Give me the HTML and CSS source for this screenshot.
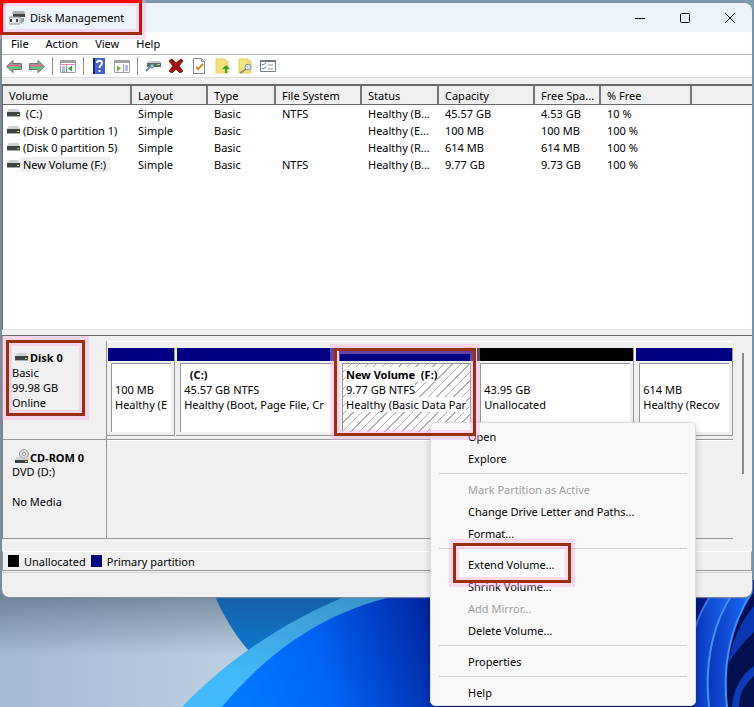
FILE: index.html
```
<!DOCTYPE html>
<html lang="en">
<head>
    <meta charset="UTF-8">
    <title>Disk Management</title>
    <link rel="stylesheet" href="styles.css">
</head>
<body>
<svg width="0" height="0" class="defs">
    <symbol id="drive" viewBox="0 0 13 8">
        <path d="M2 0h9l2 3H0z" fill="#cdd3d3"/>
        <path d="M0 3h13v4H0z" fill="#3f4544"/>
        <path d="M0 7h13v1H0z" fill="#a5abab"/>
        <path d="M10 5h2v1h-2z" fill="#b9e04a"/>
    </symbol>
</svg>
<div class="desktop">
    <svg class="wallpaper" viewBox="0 580 754 127" preserveAspectRatio="none">
        <defs>
            <linearGradient id="sky" x1="0" y1="0" x2="1" y2="0">
                <stop offset="0" stop-color="#a3bad4"/>
                <stop offset=".3" stop-color="#bccfe0"/>
            </linearGradient>
            <linearGradient id="shade" x1="0" y1="0" x2="0" y2="1">
                <stop offset="0" stop-color="#33475c" stop-opacity=".6"/>
                <stop offset=".6" stop-color="#33475c" stop-opacity="0"/>
            </linearGradient>
            <linearGradient id="petal" x1="0" y1="0" x2="0" y2="1">
                <stop offset="0" stop-color="#1a579e"/>
                <stop offset="1" stop-color="#0b78cc"/>
            </linearGradient>
            <linearGradient id="rim" x1="0" y1="1" x2="1" y2="0">
                <stop offset=".2" stop-color="#43b9fb"/>
                <stop offset="1" stop-color="#3685b4"/>
            </linearGradient>
            <linearGradient id="bloom" gradientUnits="userSpaceOnUse" x1="250" y1="707" x2="450" y2="640">
                <stop offset="0" stop-color="#0078ff"/>
                <stop offset=".4" stop-color="#0062f4"/>
                <stop offset="1" stop-color="#001f97"/>
            </linearGradient>
            <linearGradient id="ray" x1="0" y1="0" x2="1" y2="0">
                <stop offset="0" stop-color="#0a35b8"/>
                <stop offset=".8" stop-color="#1763ec"/>
                <stop offset="1" stop-color="#4597f8"/>
            </linearGradient>
        </defs>
        <path d="M0 580h754v127H0z" fill="url(#sky)"/>
        <path d="M0 580h440v127H0z" fill="url(#shade)"/>
        <path d="M208 580C222 615 236 637 250 652L380 580z" fill="url(#petal)"/>
        <path d="M182 707C230 657 290 618 352 594L470 580V707z" fill="url(#rim)"/>
        <path d="M222 707C260 661 315 614 395 596L470 580V707z" fill="url(#bloom)"/>
        <path d="M440 580h314v127H440z" fill="#031c86"/>
        <path d="M694 640C697 618 704 604 713 592L734 592C714 620 704 660 709 707H694z" fill="url(#ray)"/>
        <path d="M708 707C704 660 714 620 734 592H752C731 623 722 660 727 707z" fill="url(#ray)"/>
        <path d="M754 592C731 630 722 665 728 707H754z" fill="#03104f"/>
        <path d="M728 664C732 640 742 620 754 606V632C744 642 735 652 728 664z" fill="#0a36b4"/>
        <path d="M732 707C733 690 741 675 754 666V676C744 684 739 695 739 707z" fill="#0d3cba"/>
        <path d="M694 632C698 616 704 605 713 592" fill="none" stroke="#3c79dc" stroke-width="2"/>
        <path d="M709 707C704 660 714 620 734 592M727 707C722 665 731 624 752 592" fill="none" stroke="#4292f4" stroke-width="2"/>
    </svg>

    <div class="window">
        <div class="titlebar">
            <svg class="app-icon" width="16" height="15" viewBox="0 0 16 15">
                <path d="M4 1h11l1 3H3z" fill="#a9adad"/>
                <path d="M4 4h12v3H4z" fill="#444"/>
                <path d="M0 7h11v7H0z" fill="#e4e4e4" stroke="#999"/>
                <path d="M2 9v3M8 9v3" stroke="#444" stroke-width="2"/>
                <path d="M4 11h3" stroke="#fff" stroke-width="2"/>
                <path d="M12 8h3v3l-3 3z" fill="#9a9e9e"/>
            </svg>
            <h1 class="title">Disk Management</h1>
            <div class="window-buttons">
                <button type="button" aria-label="Minimize"><svg width="12" height="12" viewBox="0 0 12 12"><path d="M1 6.500h10"/></svg></button>
                <button type="button" aria-label="Maximize"><svg width="12" height="12" viewBox="0 0 12 12"><rect x="1.500" y="1.500" width="9" height="9" rx="1"/></svg></button>
                <button type="button" aria-label="Close"><svg width="12" height="12" viewBox="0 0 12 12"><path d="M1 1l10 10M11 1L1 11"/></svg></button>
            </div>
            <div class="mark mark-title"></div>
        </div>

        <div class="menubar">
            <button type="button">File</button>
            <button type="button">Action</button>
            <button type="button">View</button>
            <button type="button">Help</button>
        </div>

        <div class="toolbar">
            <button type="button" aria-label="Back"><svg width="16" height="16" viewBox="0 0 16 16"><path d="M.5 8.500L7 2.500v3h8.500v6H7v3z" fill="#5cc87c" stroke="#7d6d74"/><path d="M2 7.500h13" stroke="#f0609c" stroke-width="2"/></svg></button>
            <button type="button" aria-label="Forward"><svg width="16" height="16" viewBox="0 0 16 16"><path d="M15.500 8.500L9 2.500v3H.5v6H9v3z" fill="#5cc87c" stroke="#7d6d74"/><path d="M1 7.500h13" stroke="#f0609c" stroke-width="2"/></svg></button>
            <span class="divider"></span>
            <button type="button" aria-label="Show console tree"><svg width="16" height="16" viewBox="0 0 16 16"><path d="M.5 2.500h15v12H.5z" fill="#fff" stroke="#9c9fa7"/><path d="M1 4h14" stroke="#9c9fa7" stroke-width="2"/><path d="M1 6.500h14" stroke="#ee7fae"/><path d="M6.500 7v7" stroke="#9c9fa7"/><path d="M2 9h3M2 11h3M2 13h3" stroke="#5e81b5"/><path d="M8 10.500l4-3v6z" fill="#23ad3c"/></svg></button>
            <span class="divider"></span>
            <button type="button" aria-label="Help topics"><svg width="16" height="16" viewBox="0 0 16 16"><path d="M2 0h12v16H2z" fill="#4263d0"/><path d="M2 0h2v16H2z" fill="#162c7b"/><path d="M6 5c0-3 5-3 5 0 0 2-2.500 2-2.500 5M8.500 12v2" fill="none" stroke="#fff" stroke-width="2"/></svg></button>
            <button type="button" aria-label="Show action pane"><svg width="16" height="16" viewBox="0 0 16 16"><path d="M.5 2.500h15v12H.5z" fill="#fff" stroke="#9c9fa7"/><path d="M1 4h14" stroke="#9c9fa7" stroke-width="2"/><path d="M9.500 6v8" stroke="#9c9fa7"/><path d="M11 8h3M11 10h3M11 12h3" stroke="#5e81b5"/><path d="M3 7.500l4 3-4 3z" fill="#78a92f"/></svg></button>
            <span class="divider"></span>
            <button type="button" aria-label="Refresh disks"><svg width="16" height="16" viewBox="0 0 16 16"><path d="M2 5l2-2h11l1 2z" fill="#c3c9cc"/><path d="M2 5h14v4H2z" fill="#59676e"/><path d="M12 6h3v1h-3z" fill="#9ee04a"/><path d="M5 9l-4 4" stroke="#7997a7" stroke-width="2"/><circle cx="7" cy="8" r="2" fill="#a9cddd" stroke="#5b7a8b"/></svg></button>
            <button type="button" aria-label="Delete"><svg width="16" height="16" viewBox="0 0 16 16"><path d="M1 3l3-2 4 4 5-4 2 2-4 5 4 5-3 2-4-4-4 4-3-2 4-5z" fill="#a3130d" stroke="#7e1d19"/></svg></button>
            <button type="button" aria-label="Check"><svg width="16" height="16" viewBox="0 0 16 16"><path d="M2.500.5h8l3 3v12h-11z" fill="#fff" stroke="#888"/><path d="M10.500.5v3h3" fill="none" stroke="#888"/><path d="M5 9l2 2 5-5" fill="none" stroke="#c98923" stroke-width="2"/></svg></button>
            <button type="button" aria-label="Open folder"><svg width="16" height="16" viewBox="0 0 16 16"><path d="M2 1h9v2h3v12H2z" fill="#f6e27a" stroke="#e4ce65"/><path d="M11 15V11H8l4-4 4 4h-3v4z" fill="#439a2b"/></svg></button>
            <button type="button" aria-label="Find"><svg width="16" height="16" viewBox="0 0 16 16"><path d="M2 1h9v2h3v12H2z" fill="#f6e27a" stroke="#e4ce65"/><circle cx="11" cy="9" r="3" fill="#d2e8f4" stroke="#7e9aa5"/><path d="M9 11l-6 4" stroke="#9a8d74" stroke-width="2"/></svg></button>
            <button type="button" aria-label="Options"><svg width="16" height="16" viewBox="0 0 16 16"><path d="M.5 2.500h15v11H.5z" fill="#fff" stroke="#6e7887"/><path d="M0 3h16" stroke="#6e7887" stroke-width="2"/><path d="M2 6l1 1 3-2M2 10l1 1 3-2" fill="none" stroke="#507dc5"/><path d="M8 7h5M8 11h5" stroke="#8b96a6"/></svg></button>
        </div>

        <div class="volumes">
            <table>
                <colgroup>
                    <col class="c-volume"><col class="c-layout"><col class="c-type"><col class="c-fs"><col class="c-status"><col class="c-capacity"><col class="c-free"><col class="c-percent"><col>
                </colgroup>
                <thead>
                <tr><th>Volume</th><th>Layout</th><th>Type</th><th>File System</th><th>Status</th><th>Capacity</th><th>Free Spa...</th><th>% Free</th><th></th></tr>
                </thead>
                <tbody>
                <tr><td><svg class="drive"><use href="#drive"/></svg><span>&nbsp;(C:)</span></td><td>Simple</td><td>Basic</td><td>NTFS</td><td>Healthy (B...</td><td>45.57 GB</td><td>4.53 GB</td><td>10 %</td><td></td></tr>
                <tr><td><svg class="drive"><use href="#drive"/></svg><span>(Disk 0 partition 1)</span></td><td>Simple</td><td>Basic</td><td></td><td>Healthy (E...</td><td>100 MB</td><td>100 MB</td><td>100 %</td><td></td></tr>
                <tr><td><svg class="drive"><use href="#drive"/></svg><span>(Disk 0 partition 5)</span></td><td>Simple</td><td>Basic</td><td></td><td>Healthy (R...</td><td>614 MB</td><td>614 MB</td><td>100 %</td><td></td></tr>
                <tr><td><svg class="drive"><use href="#drive"/></svg><span class="selected">New Volume (F:)</span></td><td>Simple</td><td>Basic</td><td>NTFS</td><td>Healthy (B...</td><td>9.77 GB</td><td>9.73 GB</td><td>100 %</td><td></td></tr>
                </tbody>
            </table>
        </div>

        <div class="disks">
            <div class="disk-list">
                <div class="disk">
                    <div class="disk-info">
                        <h2><svg class="drive"><use href="#drive"/></svg>Disk 0</h2>
                        <p>Basic</p>
                        <p>99.98 GB</p>
                        <p>Online</p>
                        <div class="mark mark-disk"></div>
                    </div>
                    <div class="partitions">
                        <div class="partition p-efi">
                            <div class="bar"></div>
                            <div class="body"><p>&nbsp;</p><p>100 MB</p><p>Healthy (E</p></div>
                        </div>
                        <div class="partition p-c">
                            <div class="bar"></div>
                            <div class="body"><h3>&nbsp; (C:)</h3><p>45.57 GB NTFS</p><p>Healthy (Boot, Page File, Cr</p></div>
                        </div>
                        <div class="partition p-f active">
                            <div class="bar"></div>
                            <div class="body"><h3><span>New Volume &nbsp;(F:)</span></h3><p><span>9.77 GB NTFS</span></p><p><span>Healthy (Basic Data Par</span></p></div>
                            <div class="mark mark-partition"></div>
                        </div>
                        <div class="partition p-free">
                            <div class="bar unallocated"></div>
                            <div class="body"><p>&nbsp;</p><p>43.95 GB</p><p>Unallocated</p></div>
                        </div>
                        <div class="partition p-rec">
                            <div class="bar"></div>
                            <div class="body"><p>&nbsp;</p><p>614 MB</p><p>Healthy (Recov</p></div>
                        </div>
                    </div>
                </div>
                <div class="disk">
                    <div class="disk-info">
                        <h2><svg class="cdrom" width="15" height="15" viewBox="0 0 15 15"><circle cx="9" cy="5" r="4.500" fill="#dcdcdc" stroke="#999"/><circle cx="9" cy="5" r="1.500" fill="#fff" stroke="#999"/><path d="M2 8h10l2 3H0z" fill="#c5caca" opacity=".8"/><path d="M0 11h13v3H0z" fill="#3f4544"/><path d="M10 12h2v1h-2z" fill="#e0d04a"/></svg>CD-ROM 0</h2>
                        <p>DVD (D:)</p>
                        <p>&nbsp;</p>
                        <p>No Media</p>
                    </div>
                    <div class="partitions"></div>
                </div>
            </div>
            <div class="scrollbar"><div class="thumb"></div></div>
        </div>

        <div class="legend">
            <span class="swatch unallocated"></span>Unallocated
            <span class="swatch"></span>Primary partition
        </div>
        <div class="statusbar"></div>
    </div>

    <div class="context-menu">
        <button type="button">Open</button>
        <button type="button">Explore</button>
        <hr>
        <button type="button" disabled>Mark Partition as Active</button>
        <button type="button">Change Drive Letter and Paths...</button>
        <button type="button">Format...</button>
        <hr>
        <button type="button" class="extend">Extend Volume...<span class="mark mark-extend"></span></button>
        <button type="button">Shrink Volume...</button>
        <button type="button" disabled>Add Mirror...</button>
        <button type="button">Delete Volume...</button>
        <hr>
        <button type="button">Properties</button>
        <hr>
        <button type="button">Help</button>
    </div>
</div>
</body>
</html>
```
FILE: styles.css
```
*{
    margin: 0;
    padding: 0;
    box-sizing: border-box;
}
body{
    font: 11px/15px "Segoe UI", "Noto Sans", "Open Sans", sans-serif;
    color: #000;
}
button{
    font: inherit;
    color: inherit;
    border: 0;
    background: none;
}
.defs{
    position: absolute;
}
.desktop{
    position: relative;
    min-height: 100vh;
    padding: 3px 2px 0 1px;
    background: #7c9db0;
    overflow: hidden;
}
.wallpaper{
    position: absolute;
    left: 0;
    bottom: 0;
    width: 100%;
    height: 127px;
}
.window{
    position: relative;
    border-left: 1px solid #85858f;
    border-radius: 8px;
    background: #f0f0f0;
    box-shadow: 0 0 1px 1px #7d8c9c;
}

/* title, menu and tools */
.titlebar{
    position: relative;
    display: flex;
    align-items: center;
    height: 29px;
    padding-left: 7px;
    background: #edf3fa;
    border-radius: 8px 8px 0 0;
}
.title{
    flex: 1;
    margin-left: 5px;
    font-size: 11px;
    font-weight: normal;
}
.window-buttons{
    display: flex;
}
.window-buttons button{
    width: 45px;
    height: 28px;
}
.window-buttons svg{
    display: block;
    margin: 0 auto;
    fill: none;
    stroke: #111;
}
.menubar{
    display: flex;
    gap: 17px;
    height: 23px;
    padding-left: 9px;
    background: #fff;
    border-bottom: 1px solid #b4b4b4;
}
.toolbar{
    display: flex;
    align-items: center;
    gap: 7px;
    height: 23px;
    padding-left: 4px;
    background: #fff;
    border-bottom: 1px solid #dcdcdc;
}
.toolbar button{
    height: 16px;
}
.toolbar svg{
    display: block;
}
.divider{
    width: 1px;
    height: 18px;
    background: #8a8a8a;
}

/* volume list */
.volumes{
    margin-top: 6px;
    height: 246px;
    background: #fff;
    border-top: 2px solid #696969;
    border-left: 1px solid #696969;
    border-bottom: 1px solid #e3e3e3;
}
.volumes table{
    width: 100%;
    table-layout: fixed;
    border-collapse: separate;
    border-spacing: 0;
}
.c-volume{ width: 129px; }
.c-layout{ width: 76px; }
.c-type{ width: 68px; }
.c-fs{ width: 86px; }
.c-status{ width: 77px; }
.c-capacity{ width: 96px; }
.c-free{ width: 66px; }
.c-percent{ width: 91px; }
.volumes th{
    height: 19px;
    padding-left: 6px;
    text-align: left;
    font-weight: normal;
    white-space: nowrap;
    background: #f0f0f0;
    border-right: 2px solid #777;
    border-bottom: 1px solid #696969;
}
.volumes th:last-child{
    border-right: 0;
}
.volumes td{
    height: 17px;
    padding-left: 6px;
    white-space: nowrap;
}
.volumes td:first-child{
    padding-left: 4px;
}
.volumes td span{
    padding: 0 3px;
}
.volumes .selected{
    padding-right: 5px;
    background: #f0f0f0;
}
.drive{
    width: 13px;
    height: 8px;
    vertical-align: 1px;
}

/* graphical view */
.disks{
    display: flex;
    margin-top: 5px;
    border-top: 1px solid #696969;
    border-left: 1px solid #808080;
}
.disk-list{
    flex: 1;
    min-width: 0;
    padding-top: 5px;
}
.disk{
    display: flex;
    height: 99px;
    border-bottom: 1px solid #969696;
}
.disk-info{
    position: relative;
    flex: none;
    width: 104px;
    padding: 9px 0 0 9px;
    border-right: 1px solid #969696;
}
.disk-info h2{
    height: 15px;
    padding-left: 3px;
    font-size: 11px;
    white-space: nowrap;
}
.disk-info .drive{
    margin-right: 2px;
}
.disk-info .cdrom{
    vertical-align: -2px;
}
.partitions{
    display: flex;
    flex: 1;
    min-width: 0;
    gap: 1px;
    padding-top: 6px;
    border-top: 1px solid #fff;
}
.partition{
    position: relative;
    display: flex;
    flex-direction: column;
    flex-basis: 0;
    min-width: 0;
    height: 88px;
    border-right: 1px solid #969696;
    border-bottom: 1px solid #969696;
    padding-left: 1px;
    background: #f0f0f0;
}
.p-efi{ flex-grow: 67; }
.p-c{ flex-grow: 161; }
.p-f{ flex-grow: 137; }
.p-free{ flex-grow: 158; }
.p-rec{ flex-grow: 97; }
.bar{
    height: 13px;
    background: #000080;
}
.unallocated{
    background: #000;
}
.body{
    flex: 1;
    margin: 2px 3px 3px;
    padding: 3px 0 3px 3px;
    background: #fff;
    border-top: 1px solid #969696;
    border-left: 1px solid #969696;
}
.body h3{
    font-size: 11px;
    white-space: nowrap;
}
.body p{
    white-space: nowrap;
}
.active .body{
    border-right: 1px solid #969696;
    background: repeating-linear-gradient(135deg, #fff 0, #fff 5px, #b0b0b0 5px, #b0b0b0 6px);
}
.active .body span{
    background: #fff;
}
.scrollbar{
    width: 19px;
    padding: 17px 8px 0 0;
}
.thumb{
    width: 2px;
    height: 121px;
    margin-left: auto;
    background: #8a8a8a;
}
.legend{
    display: flex;
    align-items: center;
    gap: 5px;
    height: 20px;
    margin-top: 12px;
    padding-left: 5px;
    border: 1px solid #969696;
    border-top-color: #fff;
}
.swatch{
    width: 11px;
    height: 12px;
    background: #000080;
}
.swatch.unallocated{
    background: #000;
}
.statusbar{
    height: 25px;
    margin-top: 1px;
    border-top: 1px solid #d4d4d4;
}

/* context menu */
.context-menu{
    position: absolute;
    left: 430px;
    top: 422px;
    width: 266px;
    padding: 2px 0;
    background: #f9f9f9;
    border: 1px solid #dedede;
    border-radius: 5px;
    box-shadow: 0 2px 6px rgba(0, 0, 0, .2);
}
.context-menu button{
    position: relative;
    display: block;
    width: 100%;
    height: 22px;
    padding-left: 37px;
    text-align: left;
}
.context-menu button:disabled{
    color: #a0a0a0;
}
.context-menu hr{
    height: 1px;
    margin: 4px 8px;
    border: 0;
    background: #d2d2d2;
}

/* highlight frames */
.mark{
    position: absolute;
    z-index: 2;
    border: 3px solid #98300f;
    box-shadow: 0 0 0 4px rgba(255, 170, 225, .4), inset 0 0 0 3px rgba(255, 170, 225, .4);
    pointer-events: none;
}
.mark-title{
    left: -2px;
    top: -3px;
    width: 142px;
    height: 35px;
    border-color: #f00 #d01000 #98300f #f00;
}
.mark-disk{
    left: 3px;
    top: -1px;
    width: 79px;
    height: 76px;
}
.mark-partition{
    left: -4px;
    top: 0;
    width: 142px;
    height: 88px;
}
.mark-extend{
    left: 22px;
    top: -10px;
    width: 118px;
    height: 40px;
}
```
